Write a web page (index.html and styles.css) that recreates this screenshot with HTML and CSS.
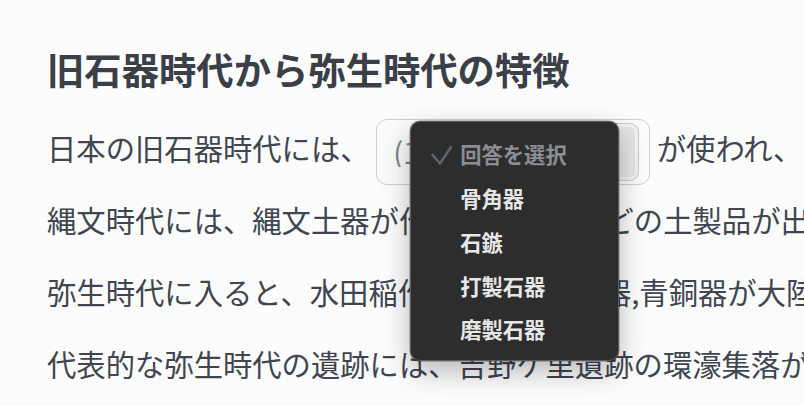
FILE: index.html
```html
<!DOCTYPE html>
<html lang="ja">
<head>
<meta charset="utf-8">
<title>旧石器時代から弥生時代の特徴</title>
<link rel="stylesheet" href="styles.css">
</head>
<body>
<main class="page">
  <h1 class="title">旧石器時代から弥生時代の特徴</h1>
  <p class="line">日本の旧石器時代には、 <span class="blank"><span class="blank-text">(1)</span><span class="blank-btn"></span><span class="menu" role="listbox"><span class="opt opt-placeholder"><svg class="check" width="22" height="22" viewBox="0 0 22 22" aria-hidden="true"><path d="M1.5 12 L9 20.5 L20 4" fill="none" stroke="#5e646c" stroke-width="2.6" stroke-linecap="round" stroke-linejoin="round"/></svg>回答を選択</span><span class="opt">骨角器</span><span class="opt">石鏃</span><span class="opt">打製石器</span><span class="opt">磨製石器</span></span></span> が使われ、</p>
  <p class="line">縄文時代には、縄文土器が作られ、土偶などの土製品が出土した。</p>
  <p class="line">弥生時代に入ると、水田稲作が伝わり、鉄器,青銅器が大陸から伝来した。</p>
  <p class="line">代表的な弥生時代の遺跡には、吉野ケ里遺跡の環濠集落がある。</p>
</main>
</body>
</html>
```
FILE: styles.css
```css
html, body {
  margin: 0;
  padding: 0;
}
body {
  background: #fbfcfb;
  color: #40454f;
  font-family: "Noto Sans CJK JP", "Noto Sans", sans-serif;
  overflow: hidden;
  width: 804px;
  height: 406px;
}
.page {
  padding: 43px 0 0 47px;
  white-space: nowrap;
}
.title {
  margin: 0 0 16px;
  font-size: 37.33px;
  line-height: 52px;
  font-weight: 700;
  color: #3b3f48;
}
.line {
  margin: 0;
  font-size: 29.33px;
  line-height: 72px;
  height: 72px;
}
.blank {
  position: relative;
  display: inline-flex;
  align-items: center;
  box-sizing: border-box;
  width: 274px;
  height: 66px;
  vertical-align: middle;
  border: 1px solid #cdd0d0;
  border-radius: 11px;
  background: #fafbfb;
  padding: 3px 10px 3px 16px;
}
.blank-text {
  flex: 1;
  color: #80858c;
  overflow: hidden;
  line-height: 1;
}
.blank-btn {
  align-self: stretch;
  width: 44px;
  box-sizing: border-box;
  border: 1px solid #c9cbcb;
  border-radius: 9px;
  background: #e4e6e6;
  box-shadow: inset 0 0 0 3px #f1f2f2;
}
.menu {
  position: absolute;
  left: 33px;
  top: 1px;
  width: 209px;
  height: 240px;
  box-sizing: border-box;
  display: flex;
  flex-direction: column;
  padding: 10px 0 9px;
  background: #2d2d2d;
  border: 1px solid #5d5e60;
  border-radius: 10px;
  box-shadow: 0 10px 28px rgba(0, 0, 0, 0.28), 0 0 0 0.5px rgba(0, 0, 0, 0.4);
}
.opt {
  display: flex;
  align-items: center;
  height: 44px;
  padding-left: 49px;
  position: relative;
  font-size: 21.3px;
  font-weight: 700;
  color: #e6e6e6;
  line-height: 1;
}
.opt-placeholder {
  color: #8b8e94;
}
.check {
  position: absolute;
  left: 20px;
  top: 11px;
}
```
